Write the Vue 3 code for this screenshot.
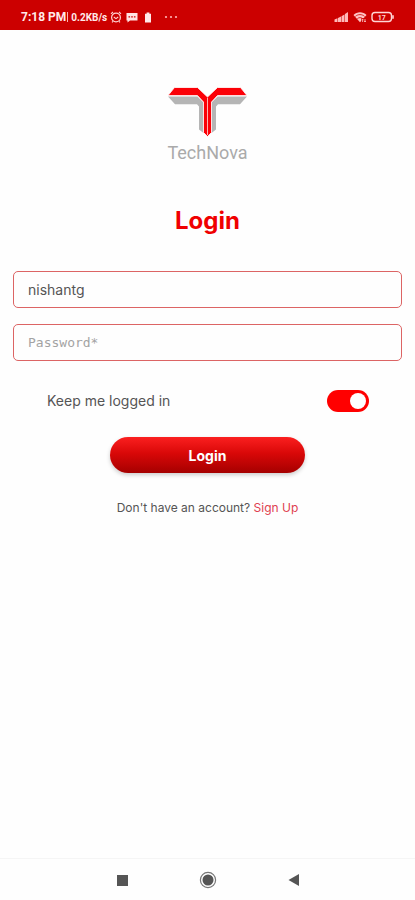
<template>
  <div class="screen">
    <!-- status bar -->
    <header class="status-bar">
      <div class="status-left">
        <span class="time">7:18 PM</span>
        <span class="divider"></span>
        <span class="speed">0.2KB/s</span>
        <svg class="alarm" width="12" height="12" viewBox="0 0 12 12" fill="none" stroke="#ffd2d2">
          <circle cx="6" cy="6.5" r="4.4" stroke-width="1.2" />
          <path d="M1 2.8 3 1M11 2.8 9 1M3.8 6l2.2 1.6L8.2 6M3 10.3l-1 1.1M9 10.3l1 1.1" stroke-width="1.1" />
        </svg>
        <svg class="message" width="12" height="11" viewBox="0 0 12 11">
          <path d="M0.5 1h11v7.5H4L1.5 10.6V8.5h-1z" fill="#ffe4e4" />
          <path d="M2.5 4.8h1.6M5.2 4.8h1.6M7.9 4.8h1.6" stroke="#cc0000" stroke-width="1.3" />
        </svg>
        <svg class="cell" width="8" height="11" viewBox="0 0 8 11">
          <path d="M2.6 0.5h2.8v1.3H7v8.7H1V1.8h1.6z" fill="#ffe9e9" />
        </svg>
        <svg class="dots" width="14" height="4" viewBox="0 0 14 4" fill="#ffb3b3">
          <circle cx="2" cy="2" r="1.1" />
          <circle cx="7" cy="2" r="1.1" />
          <circle cx="12" cy="2" r="1.1" />
        </svg>
      </div>
      <div class="status-right">
        <svg width="15" height="12" viewBox="0 0 15 12" fill="#ffb9b9">
          <path d="M0.5 8.5 3.5 7.3V11h-3zM4 7l3-1.4V11H4zM7.5 5.2l3-1.6V11h-3zM11 3l3-2v10h-3z" />
        </svg>
        <svg width="14" height="12" viewBox="0 0 14 12">
          <path d="M0.5 4C4 0.2 10 0.2 13.5 4L7 11.2z" fill="#ffc4c4" />
          <path d="M2.4 5.4c2.6-2.4 6.6-2.4 9.2 0M4.4 7.6c1.6-1.3 3.6-1.3 5.2 0" stroke="#cc0000" stroke-width="0.8" fill="none" />
          <path d="M8.2 7.2h5V12h-5z" fill="#cc0000" />
          <path d="M9.6 11V8.2M12 8v2.8M8.6 9.2l1-1 1 1M11 10l1 1 1-1" stroke="#ffc4c4" stroke-width="0.8" fill="none" />
        </svg>
        <svg width="24" height="12" viewBox="0 0 24 12">
          <rect x="1" y="1.5" width="19.5" height="9" rx="3" fill="none" stroke="#ffd6d6" stroke-width="1.4" />
          <path d="M22 4.2v3.6" stroke="#ffd6d6" stroke-width="1.6" />
          <text x="10.8" y="8.8" text-anchor="middle" class="battery-text">17</text>
        </svg>
      </div>
    </header>

    <main class="content">
      <div class="brand">
        <svg class="brand-mark" width="80" height="50" viewBox="0 0 80 50">
          <path d="M0 9.5h29.5l6 6V46L31 42.5V19.500L29 17.300H7z" fill="#b5b5b5" />
          <path d="M79 9.500H49.500l-6 6V46L48 42.500V19.500L50 17.300H72z" fill="#b5b5b5" />
          <path
            d="M0 8.600 6.500 0.500h23L39.500 10 49.500 0.500h23L79 8.600H49.500L43.500 15v30.500L39.500 49.500 35.500 45.500V15L29.500 8.600z"
            fill="#fb0007"
            stroke="#fff"
            stroke-width="0.8" />
          <path d="M39.500 11v37" stroke="#ffb0b0" stroke-width="1" />
        </svg>
        <span class="brand-name">TechNova</span>
      </div>

      <h1 class="title">Login</h1>

      <form class="login-form" @submit.prevent>
        <label class="field">
          <input v-model="username" type="text" aria-label="Username" />
        </label>

        <label class="field field-password">
          <input v-model="password" type="password" placeholder="Password*" aria-label="Password" />
        </label>

        <div class="keep-row">
          <label for="keep">Keep me logged in</label>
          <input id="keep" v-model="keepLoggedIn" class="toggle" type="checkbox" role="switch" />
        </div>

        <button class="login-btn" type="submit">Login</button>
      </form>

      <p class="signup">Don't have an account? <a href="#signup">Sign Up</a></p>
    </main>

    <!-- system navigation -->
    <nav class="nav-bar">
      <button type="button" aria-label="Recent apps">
        <svg width="18" height="18" viewBox="0 0 18 18"><rect x="4" y="4" width="11" height="11" fill="#555" /></svg>
      </button>
      <button type="button" aria-label="Home">
        <svg width="18" height="18" viewBox="0 0 18 18">
          <circle cx="9" cy="9" r="7.6" fill="none" stroke="#777" stroke-width="1.2" />
          <circle cx="9" cy="9" r="5.5" fill="#555" />
        </svg>
      </button>
      <button type="button" aria-label="Back">
        <svg width="18" height="18" viewBox="0 0 18 18"><path d="M14 3v12L3.500 9z" fill="#555" /></svg>
      </button>
    </nav>
  </div>
</template>

<script setup>
import { ref } from 'vue'

const username = ref('nishantg')
const password = ref('')
const keepLoggedIn = ref(true)
</script>

<style>
body {
  background: #fefefe;
}
</style>

<style scoped>
.screen {
  min-height: 100vh;
  display: flex;
  flex-direction: column;
  background: #fefefe;
  color: #555;
  font-family: Inter, "Open Sans", "Liberation Sans", sans-serif;
}

.screen * {
  box-sizing: border-box;
}

.status-bar {
  height: 30px;
  padding: 4px 20px 0 21px;
  display: flex;
  align-items: center;
  justify-content: space-between;
  background: #cc0000;
  color: #ffe9e9;
  font-family: Roboto, sans-serif;
}

.status-bar svg {
  display: block;
}

.status-left,
.status-right {
  display: flex;
  align-items: center;
}

.status-right {
  gap: 4px;
}

.time {
  font-size: 12px;
  font-weight: 700;
}

.divider {
  width: 1px;
  height: 10px;
  margin: 0 3px 0 1px;
  background: #ffb3b3;
}

.speed {
  font-size: 10px;
  font-weight: 700;
}

.alarm {
  margin-left: 3px;
}

.message {
  margin-left: 4px;
}

.cell {
  margin-left: 6px;
}

.dots {
  margin-left: 12px;
}

.battery-text {
  fill: #ffd6d6;
  font-size: 7px;
  font-weight: 700;
}

.content {
  flex: 1;
  padding: 57px 13px 24px;
}

.brand {
  display: flex;
  flex-direction: column;
  align-items: center;
}

.brand-mark {
  display: block;
}

.brand-name {
  margin-top: 4px;
  color: #aaa;
  font-family: Roboto, sans-serif;
  font-size: 18px;
  line-height: 24px;
}

.title {
  margin: 40px 0 34px;
  color: #f00000;
  font-size: 24px;
  font-weight: 700;
  line-height: 32px;
  text-align: center;
}

.login-form {
  display: flex;
  flex-direction: column;
}

.field {
  display: flex;
  height: 37px;
  border: 1px solid #dc6464;
  border-radius: 5px;
}

.field input {
  flex: 1;
  min-width: 0;
  margin: 0;
  padding: 0 14px;
  border: 0;
  outline: none;
  background: transparent;
  color: #555;
  font-family: inherit;
  font-size: 14px;
}

.field-password {
  margin-top: 16px;
}

.field-password input {
  font-family: "DejaVu Sans Mono", monospace;
  font-size: 13px;
}

.field input::placeholder {
  color: #a3a3a3;
  opacity: 1;
}

.keep-row {
  display: flex;
  align-items: center;
  justify-content: space-between;
  margin: 29px 33px 25px 34px;
  font-size: 14px;
  line-height: 22px;
}

.toggle {
  appearance: none;
  display: flex;
  align-items: center;
  width: 42px;
  height: 22px;
  margin: 0;
  padding: 3px;
  border-radius: 11px;
  background: #bbb;
  cursor: pointer;
}

.toggle::before {
  content: "";
  width: 16px;
  height: 16px;
  border-radius: 50%;
  background: #fff;
}

.toggle:checked {
  justify-content: flex-end;
  background: #ff0000;
}

.login-btn {
  align-self: center;
  width: 50%;
  height: 36px;
  padding: 0;
  border: 0;
  border-radius: 18px;
  background: linear-gradient(#fb2020, #d90808 45%, #a50000);
  box-shadow: 0 2px 4px rgba(0, 0, 0, 0.2);
  color: #fff;
  font-family: inherit;
  font-size: 14px;
  font-weight: 700;
  cursor: pointer;
}

.signup {
  margin: 26px 0 0;
  font-size: 12px;
  line-height: 18px;
  text-align: center;
}

.signup a {
  color: #df4050;
  text-decoration: none;
}

.nav-bar {
  display: flex;
  align-items: center;
  justify-content: center;
  gap: 68px;
  height: 42px;
  border-top: 1px solid #f5f5f5;
}

.nav-bar button {
  padding: 0;
  border: 0;
  background: none;
}

.nav-bar svg {
  display: block;
}
</style>
